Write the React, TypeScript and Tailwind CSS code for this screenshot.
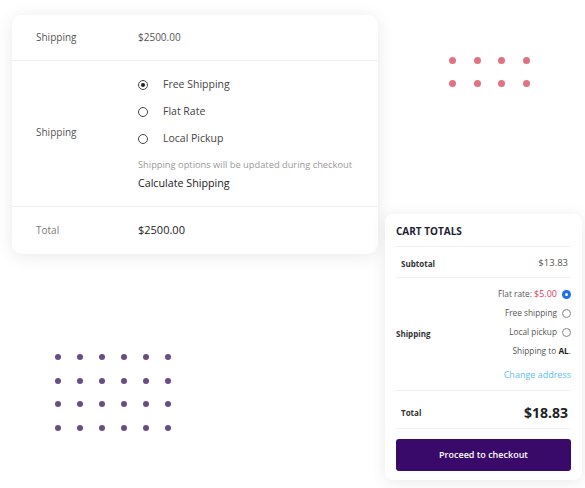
import React from "react";

const font = { fontFamily: '"Open Sans", "Liberation Sans", sans-serif' };

function Radio({ checked }: { checked?: boolean }) {
  return (
    <span className="flex h-[10px] w-[10px] items-center justify-center rounded-full border border-[#444]">
      {checked && <span className="h-[4px] w-[4px] rounded-full bg-[#222]" />}
    </span>
  );
}

function SmallRadio({ checked }: { checked?: boolean }) {
  return checked ? (
    <span className="flex h-[9px] w-[9px] items-center justify-center rounded-full bg-[#1a6ff2]">
      <span className="h-[3px] w-[3px] rounded-full bg-white" />
    </span>
  ) : (
    <span className="h-[9px] w-[9px] rounded-full border border-[#888] bg-white" />
  );
}

export default function App() {
  return (
    <div
      className="flex h-[488px] w-[585px] overflow-hidden bg-white text-[#333]"
      style={font}
    >
      {/* Left column */}
      <div className="flex flex-col pl-[12px] pt-[15px]">
        <div className="flex w-[366px] flex-col rounded-[10px] bg-white shadow-[0_2px_18px_rgba(0,0,0,0.09)]">
          <div className="flex h-[46px] items-center border-b border-[#f0f0f0] text-[10px]">
            <span className="w-[126px] pl-[24px] text-[#555]">Shipping</span>
            <span className="text-[#555]">$2500.00</span>
          </div>
          <div className="flex h-[146px] items-start border-b border-[#f0f0f0]">
            <span className="mt-[64px] w-[126px] pl-[24px] text-[10px] leading-[14px] text-[#555]">
              Shipping
            </span>
            <div className="flex flex-col pt-[10px]">
              <div className="flex h-[27px] items-center gap-[15px] text-[10.5px] text-[#444]">
                <Radio checked />
                <span>Free Shipping</span>
              </div>
              <div className="flex h-[27px] items-center gap-[15px] text-[10.5px] text-[#444]">
                <Radio />
                <span>Flat Rate</span>
              </div>
              <div className="flex h-[27px] items-center gap-[15px] text-[10.5px] text-[#444]">
                <Radio />
                <span>Local Pickup</span>
              </div>
              <span className="mt-[6px] text-[9.3px] leading-[13px] text-[#999]">
                Shipping options will be updated during checkout
              </span>
              <span className="mt-[5px] text-[10.7px] leading-[15px] text-[#222]">
                Calculate Shipping
              </span>
            </div>
          </div>
          <div className="flex h-[47px] items-center text-[10px]">
            <span className="w-[126px] pl-[24px] text-[#777]">Total</span>
            <span className="text-[11px] font-medium text-[#222]">$2500.00</span>
          </div>
        </div>

        <div className="ml-[43px] mt-[100px] grid w-max grid-cols-6 gap-x-[16px] gap-y-[17.7px]">
          {Array.from({ length: 24 }).map((_, i) => (
            <span key={i} className="h-[6px] w-[6px] rounded-full bg-[#6a4c85]" />
          ))}
        </div>
      </div>

      {/* Right column */}
      <div className="ml-[7px] flex flex-col">
        <div className="ml-[64px] mt-[57px] grid w-max grid-cols-4 gap-x-[17.7px] gap-y-[16px]">
          {Array.from({ length: 8 }).map((_, i) => (
            <span key={i} className="h-[7px] w-[7px] rounded-full bg-[#e07283]" />
          ))}
        </div>

        <div className="mt-[127px] flex w-[197px] flex-col rounded-[8px] bg-white px-[11px] pb-[9px] shadow-[0_2px_16px_rgba(0,0,0,0.09)]">
          <div className="flex h-[33px] items-center border-b border-[#f0f0f0] pt-[2px] text-[10px] font-bold text-[#1f1d36]">
            CART TOTALS
          </div>
          <div className="flex h-[31px] items-center justify-between border-b border-[#f0f0f0] pl-[5px] pr-[3px] pt-[3px]">
            <span className="text-[8px] font-bold text-[#333]">Subtotal</span>
            <span className="text-[9.5px] text-[#555]">$13.83</span>
          </div>
          <div className="flex h-[113px] items-center justify-between border-b border-[#f0f0f0]">
            <span className="text-[8px] font-bold text-[#333]">Shipping</span>
            <div className="flex flex-col items-end text-[8.3px] text-[#555]">
              <div className="flex h-[20px] items-center gap-[5px]">
                <span>
                  Flat rate: <span className="text-[9px] text-[#e2405c]">$5.00</span>
                </span>
                <SmallRadio checked />
              </div>
              <div className="flex h-[19px] items-center gap-[5px]">
                <span>Free shipping</span>
                <SmallRadio />
              </div>
              <div className="flex h-[19px] items-center gap-[5px]">
                <span>Local pickup</span>
                <SmallRadio />
              </div>
              <div className="flex h-[19px] items-center">
                <span>
                  Shipping to <span className="font-bold text-[#222]">AL</span>.
                </span>
              </div>
              <div className="mt-[4px] flex h-[19px] items-center text-[9px] text-[#62bcf4]">
                Change address
              </div>
            </div>
          </div>
          <div className="flex h-[38px] items-center justify-between border-b border-[#f0f0f0] pl-[5px] pr-[3px] pt-[6px]">
            <span className="text-[8px] font-bold text-[#333]">Total</span>
            <span className="text-[14px] font-bold text-[#222]">$18.83</span>
          </div>
          <button className="mt-[10px] flex h-[32px] items-center justify-center rounded-[3px] bg-[#3a0a6a] text-[9px] font-semibold text-white">
            Proceed to checkout
          </button>
        </div>
      </div>
    </div>
  );
}
